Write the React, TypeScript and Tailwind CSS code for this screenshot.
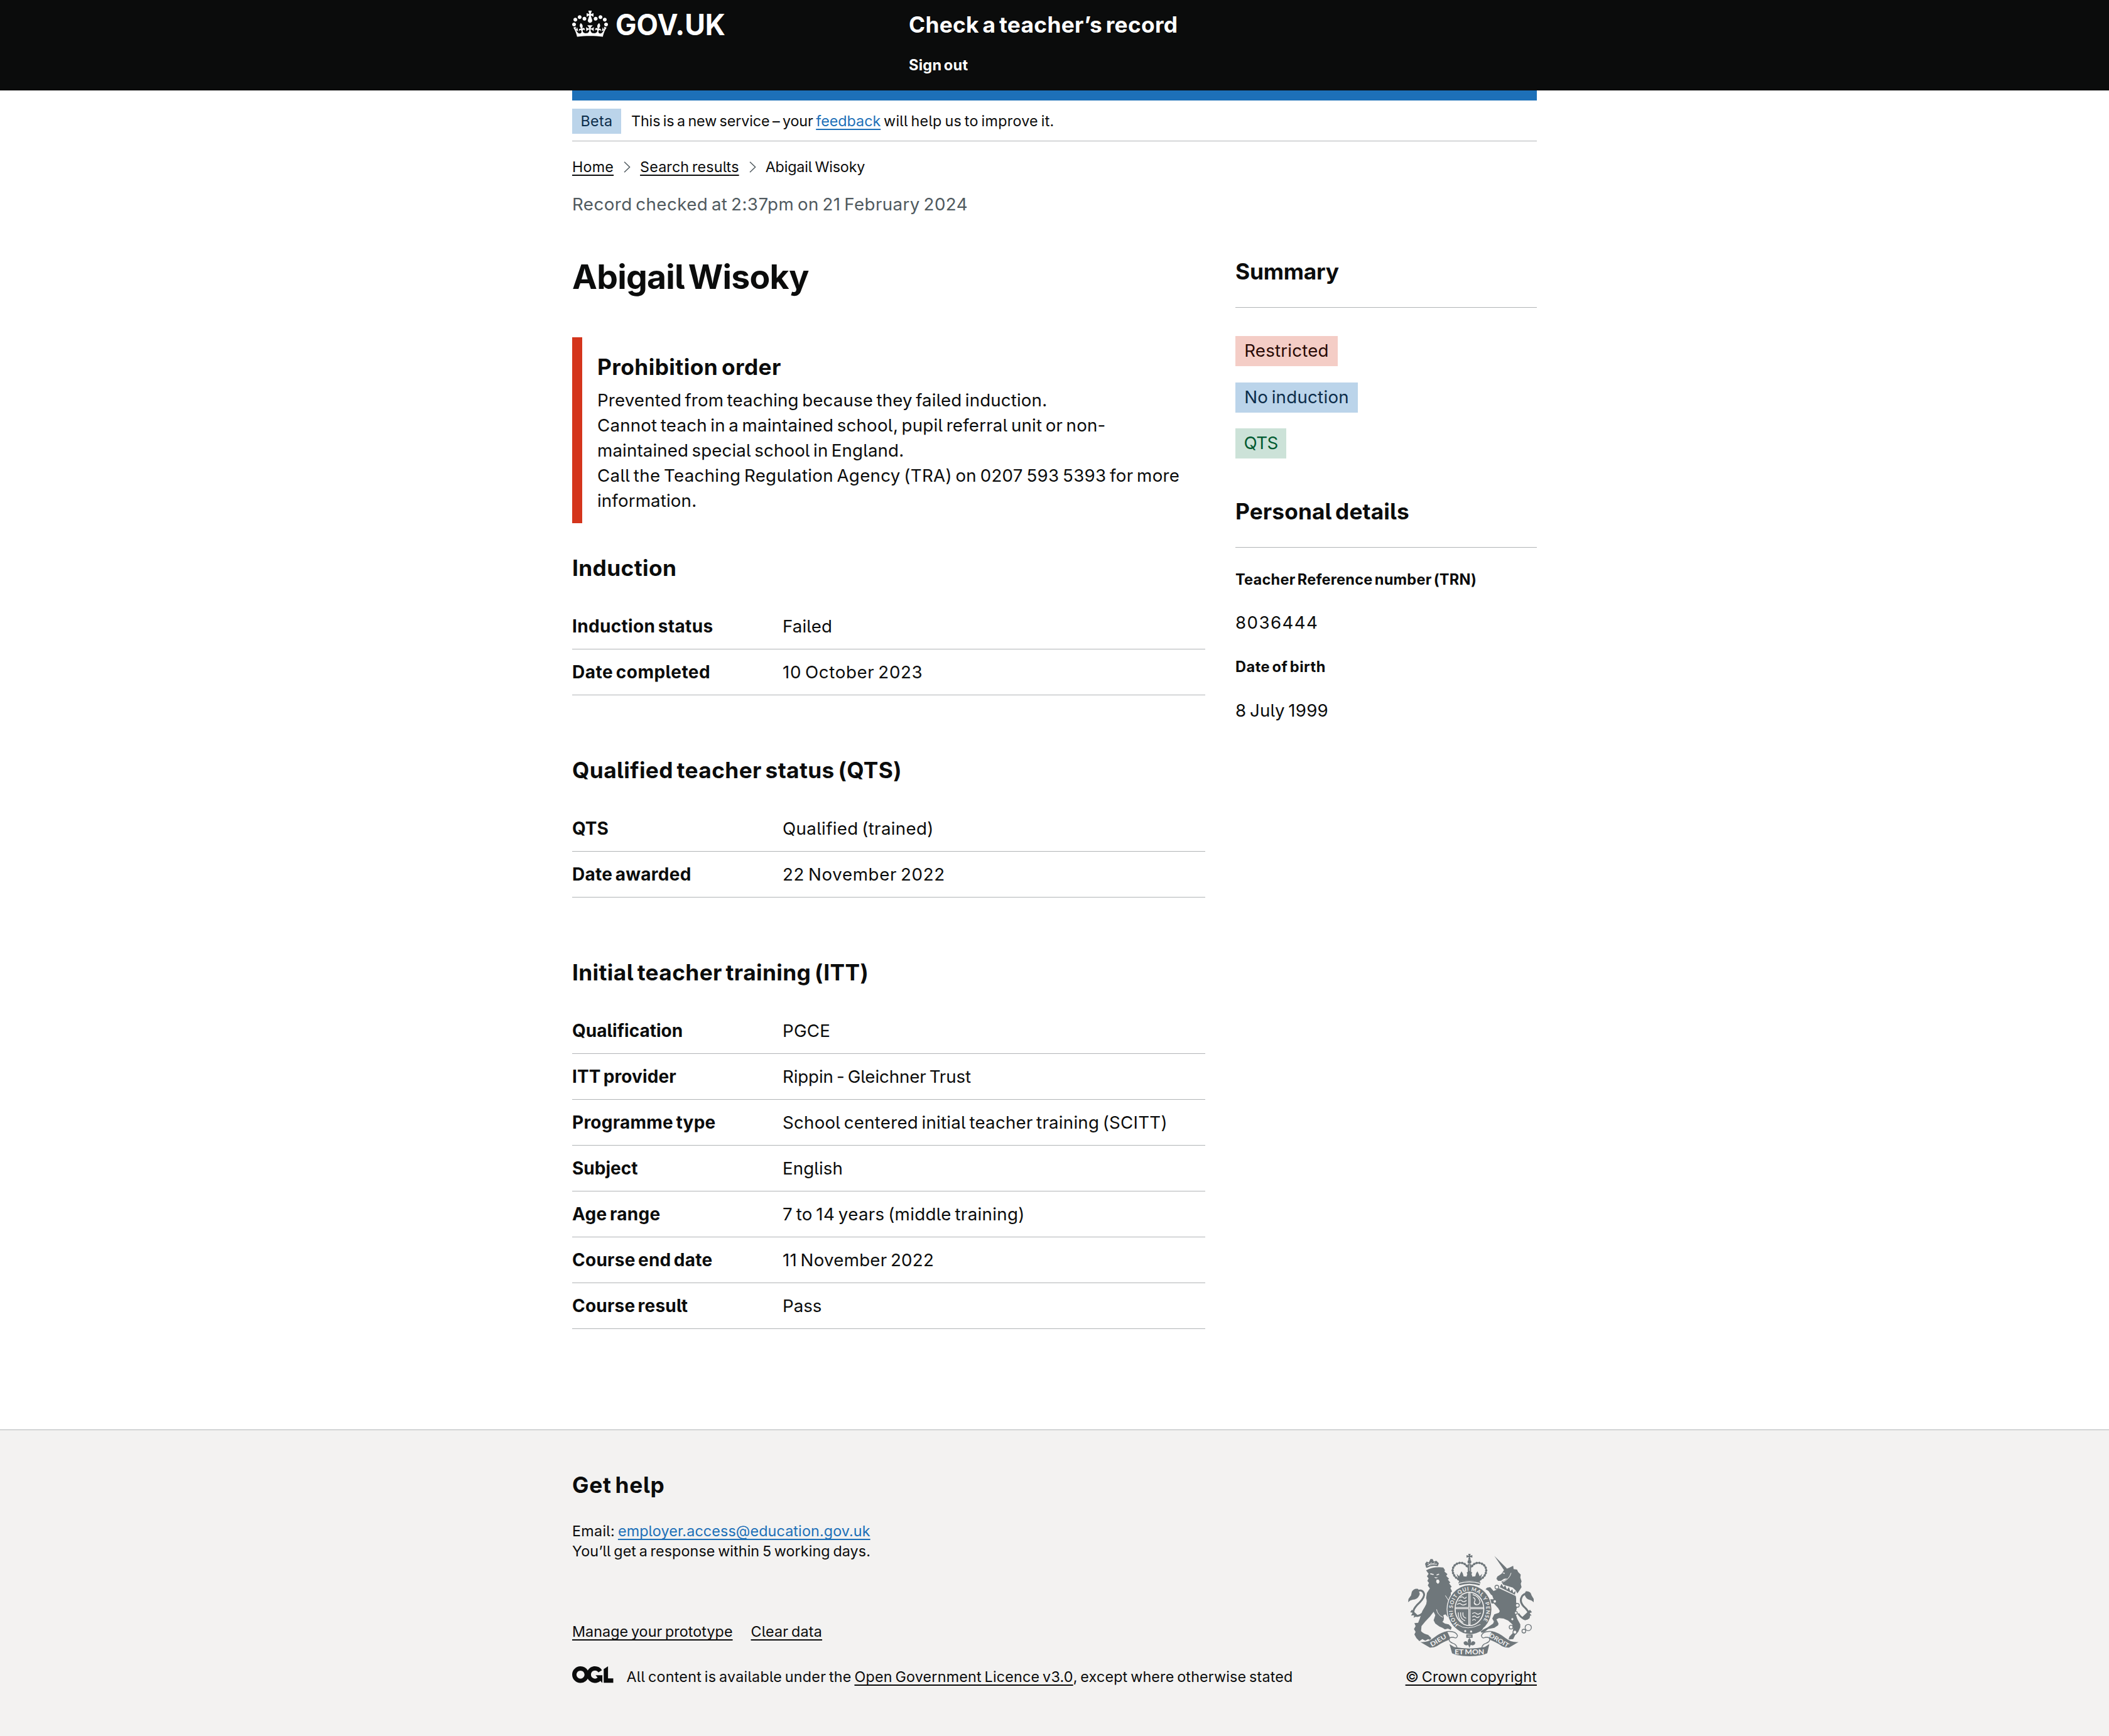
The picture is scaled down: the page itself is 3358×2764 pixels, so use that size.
import type { ReactNode } from 'react';

type Row = { label: string; value: string; labelClass?: string; valueClass?: string };

const induction: Row[] = [
  { label: 'Induction status', value: 'Failed', labelClass: 'tracking-[0.33px]', valueClass: 'tracking-[0.15px]' },
  { label: 'Date completed', value: '10 October 2023', labelClass: 'tracking-[0.5px]', valueClass: 'tracking-[0.65px]' },
];

const qts: Row[] = [
  { label: 'QTS', value: 'Qualified (trained)', valueClass: 'tracking-[0.35px]' },
  { label: 'Date awarded', value: '22 November 2022', labelClass: 'tracking-[0.28px]', valueClass: 'tracking-[0.65px]' },
];

const itt: Row[] = [
  { label: 'Qualification', value: 'PGCE', valueClass: 'tracking-[0.2px]' },
  { label: 'ITT provider', value: 'Rippin - Gleichner Trust', labelClass: 'tracking-[0.1px]', valueClass: 'tracking-[-0.12px]' },
  { label: 'Programme type', value: 'School centered initial teacher training (SCITT)', labelClass: 'tracking-[0.25px]', valueClass: 'tracking-[0.24px]' },
  { label: 'Subject', value: 'English', valueClass: 'tracking-[0.1px]' },
  { label: 'Age range', value: '7 to 14 years (middle training)', labelClass: 'tracking-[0.28px]', valueClass: 'tracking-[0.34px]' },
  { label: 'Course end date', value: '11 November 2022', labelClass: 'tracking-[0.25px]', valueClass: 'tracking-[0.25px]' },
  { label: 'Course result', value: 'Pass', labelClass: 'tracking-[0.2px]' },
];

function Crown() {
  return (
    <svg viewBox="0 0 132 97" className="h-[42px] w-[57px]" fill="currentColor" fillRule="evenodd">
      <path d="M25 30.2c3.5 1.5 7.7-.2 9.1-3.7 1.5-3.6-.2-7.8-3.9-9.2-3.6-1.4-7.6.3-9.1 3.9-1.4 3.5.3 7.5 3.9 9zM9 39.5c3.6 1.5 7.8-.2 9.2-3.7 1.5-3.6-.2-7.8-3.9-9.1-3.6-1.5-7.6.2-9.1 3.8-1.4 3.5.3 7.5 3.8 9zM4.4 57.2c3.5 1.5 7.7-.2 9.1-3.8 1.5-3.6-.2-7.7-3.9-9.1-3.5-1.5-7.6.3-9.1 3.8-1.4 3.5.3 7.6 3.9 9.1zm38.3-21.4c3.5 1.5 7.7-.2 9.1-3.8 1.5-3.6-.2-7.7-3.9-9.1-3.6-1.5-7.6.3-9.1 3.8-1.3 3.6.4 7.7 3.9 9.1zm64.4-5.6c-3.6 1.5-7.8-.2-9.1-3.7-1.5-3.6.2-7.8 3.8-9.2 3.6-1.4 7.7.3 9.2 3.9 1.3 3.5-.4 7.5-3.9 9zm15.9 9.3c-3.6 1.5-7.7-.2-9.1-3.7-1.5-3.6.2-7.8 3.7-9.1 3.6-1.5 7.7.2 9.2 3.8 1.5 3.5-.3 7.5-3.8 9zm4.7 17.7c-3.6 1.5-7.8-.2-9.2-3.8-1.5-3.6.2-7.7 3.9-9.1 3.6-1.5 7.7.3 9.2 3.8 1.3 3.5-.4 7.6-3.9 9.1zM89.3 35.8c-3.6 1.5-7.8-.2-9.2-3.8-1.4-3.6.2-7.7 3.9-9.1 3.6-1.5 7.7.3 9.2 3.8 1.4 3.6-.3 7.7-3.9 9.1zM69.7 17.7l8.9 4.7V9.3l-8.9 2.8c-.2-.3-.5-.6-.9-.9L72.4 0H59.6l3.5 11.2c-.3.3-.6.5-.9.9l-8.8-2.8v13.1l8.8-4.7c.3.3.6.7.9.9l-5 15.4v.1c-.2.8-.4 1.6-.4 2.4 0 4.1 3.1 7.5 7 8.1h.2c.3 0 .7.1 1 .1.4 0 .7 0 1-.1h.2c4-.6 7.1-4.1 7.1-8.1 0-.8-.1-1.7-.4-2.4V34l-5.1-15.4c.4-.2.7-.6 1-.9zM66 92.8c16.9 0 32.8 1.1 47.1 3.2 4-16.9 8.9-26.7 14-33.5l-9.6-3.4c1 4.9 1.1 7.2 0 10.2-1.5-1.4-3-4.3-4.2-8.7L108.6 76c2.8-2 5-3.2 7.5-3.3-4.4 9.4-10 11.9-13.6 11.2-4.3-.8-6.3-4.6-5.6-7.9 1-4.7 5.7-5.9 8-.5 4.3-8.7-3-11.4-7.6-8.8 7.1-7.2 7.9-13.5 2.1-21.1-8 6.1-8.1 12.3-4.5 20.8-4.7-5.4-12.1-2.5-9.5 6.2 3.4-5.2 7.9-2 7.2 3.1-.6 4.3-6.4 7.8-13.5 7.2-10.3-.9-10.9-8-11.2-13.8 2.5-.5 7.1 1.8 11 7.3L80.2 60c-4.1 4.4-8 5.3-12.3 5.4 1.4-4.4 8-11.6 8-11.6H55.5s6.4 7.2 7.9 11.6c-4.2-.1-8-1-12.3-5.4l1.4 16.4c3.9-5.5 8.5-7.7 10.9-7.3-.3 5.8-.9 12.8-11.1 13.8-7.2.6-12.9-2.9-13.5-7.2-.7-5 3.8-8.3 7.1-3.1 2.7-8.7-4.6-11.6-9.4-6.2 3.7-8.5 3.6-14.7-4.6-20.8-5.8 7.6-5 13.9 2.2 21.1-4.7-2.6-11.9.1-7.7 8.8 2.3-5.5 7.1-4.2 8.1.5.7 3.3-1.3 7.1-5.7 7.9-3.5.7-9-1.8-13.5-11.2 2.5.1 4.7 1.3 7.5 3.3l-4.7-15.4c-1.2 4.4-2.7 7.2-4.3 8.7-1.1-3-.9-5.3 0-10.2l-9.5 3.4c5 6.9 9.9 16.7 14 33.5 14.8-2.1 30.8-3.2 47.7-3.2z" />
    </svg>
  );
}

function OglMark() {
  return (
    <svg viewBox="0 0 483.2 195.7" className="-mt-px h-[26.5px] w-[65.5px]" fill="currentColor">
      <path d="M421.5 142.8V.1l-50.7 32.3v161.1h112.4v-50.7zm-122.3-9.6A47.12 47.12 0 0 1 221 97.8c0-26 21.1-47.1 47.1-47.1 16.7 0 31.4 8.7 39.7 21.8l42.7-27.2A97.63 97.63 0 0 0 268.1 0c-36.5 0-68.3 20.1-85.1 49.7A98 98 0 0 0 97.8 0C43.9 0 0 43.9 0 97.8s43.9 97.8 97.8 97.8c36.5 0 68.3-20.1 85.1-49.7a97.76 97.76 0 0 0 149.6 25.4l19.4 22.2h3v-87.8h-80l24.3 27.5zM97.8 145c-26 0-47.1-21.1-47.1-47.1s21.1-47.1 47.1-47.1 47.2 21 47.2 47S123.8 145 97.8 145" />
    </svg>
  );
}

/* Royal coat of arms: lion, unicorn, crowned garter shield and motto ribbon */
function Crest() {
  const ink = '#6f777b';
  const paper = '#f3f2f1';
  return (
    <svg viewBox="36 27 600 489" className="h-[163px] w-[200px]" fill={ink} fontFamily="Lato, sans-serif" fontWeight={700}>
      {/* central crown */}
      <path d="M323 27h12l-3 9 11-3v12l-11-3 3 14h-12l3-14-11 3V33l11 3z" />
      <circle cx="329" cy="65" r="9" />
      <path d="M321 76h16v44h-16z" />
      <path d="M326 80h6v36h-6z" fill={paper} opacity=".45" />
      <g fill="none" stroke={ink}>
        <path d="M276 148C244 130 240 92 266 76c22-13 44-4 55 16M382 148c32-18 36-56 10-72-22-13-44-4-55 16" strokeWidth="5" />
        <path d="M276 148C244 130 240 92 266 76c22-13 44-4 55 16M382 148c32-18 36-56 10-72-22-13-44-4-55 16" strokeWidth="11" strokeLinecap="round" strokeDasharray="1 12" />
      </g>
      <path d="M268 122l12 12 6-14 5-10 6 10 4 14 14 2 4-12-3-8 13-8 13 8-3 8 4 12 14-2 4-14 6-10 5 10 6 14 12-12-12 40q-49-16-98 0z" />
      <path d="M276 163q53-18 106 0l-5 15q-48-15-96 0z" />
      <path d="M279 168q50-15 100 0" fill="none" stroke={paper} strokeWidth="4" />
      {/* lion */}
      <path d="M122 92l-5-18 8-10 10 4 8-16h10l6 12 12-4 12 12-5 14q-28-6-52 8z" />
      <path d="M128 84q24-12 46-8M130 72l8 6 8-8 8 6 10-8" fill="none" stroke={paper} strokeWidth="3" />
      <path d="M122 106Q160 86 204 92L212 104 210 112 224 124 218 132 232 146 226 150 238 164 232 168 244 184 238 190 246 206 240 212 240 330 226 330 214 316 204 320Q212 340 200 352L212 360 230 364 244 378 240 390 226 384 212 388 200 380 186 374 166 360 158 344 166 320 158 304Q140 330 118 350L100 372 98 396Q110 410 132 414L146 428 144 440 132 434 118 442 104 434 90 444 76 430 66 412 72 400 64 386 72 372 66 358 84 356 92 336 104 300 116 280Q130 260 122 238L126 214 140 192 130 178 136 166 128 156 134 144 126 134 134 122Z" />
      <path d="M142 122l16 4M172 128l12-4" stroke={paper} strokeWidth="5" fill="none" />
      <path d="M160 138l8 6 12-4M172 150h10l4 8-2 8-6 4-8-8z" fill={paper} />
      <path d="M214 226l22 34M172 292q4 26 30 38" fill="none" stroke={paper} strokeWidth="3" />
      <path d="M106 310Q80 334 64 316 54 298 78 272 116 238 112 218 104 192 74 208" fill="none" stroke={ink} strokeWidth="9" />
      <path d="M84 194q-20-4-30 14l-4 18-12 16-2 16q10-10 22-12 26 0 34-28zM54 294l-8 12 12 2-8 14 16-2-4 12 22-10z" />
      {/* unicorn */}
      <path d="M448 37l60 60-12 10z" />
      <path d="M538 84l2 16 16 2 6 12 12 12-2 14 6 18-4 12 4 16-10 16-10 14-8-14-14-14-20-6-26-8-8-14 16-6 12-10-16 2-14 10-14 0-8-10 4-10 20-14 14-20 22-8z" />
      <path d="M488 118l10 2" fill="none" stroke={paper} strokeWidth="4" />
      <path d="M528 118q-8 30-40 44" fill="none" stroke={paper} strokeWidth="3" />
      <path d="M482 170l10 16 8-8 8 20 10-12 6 20 10-10 4 18 12-10-4 18-72-36z" />
      <path d="M472 192l78 36 2 10 0 20 6 16-6 26-6 4 12 34 14 26 0 14-10 22-14 14-10 20-22 2 4-14 16-16 2-24-4-18-20-18-22-10-22-2-12 6 10 20-2 8-18 12-30 6-16 14-14 4-6-6 14-10 20-10 26-18 4-10-8-14 10-20 22-8 4-8-14-24-16-34-12-32z" />
      <path d="M466 214l-20-8-18-20-14 2-8 8 14 8 12 18 20 10-4 12-22 0-14-10-8 10 14 14 8 6 20 0 18 20 8-12-8-8 12-12z" />
      <path d="M562 312q28 40 50 20 10-24-24-54-22-24-8-48 14-20 38-8" fill="none" stroke={ink} strokeWidth="9" />
      <path d="M598 206q24-2 28 20l10 16v16q-10-10-22-12-18-6-22-28zM618 294l10 12-12 4 10 12-16 0 2 12-18 10-14-14z" />
      {/* chain */}
      <g fill={paper} stroke={ink} strokeWidth="4">
        <circle cx="460" cy="186" r="9" />
        <circle cx="450" cy="254" r="8" />
        <circle cx="558" cy="273" r="9" />
        <circle cx="551" cy="309" r="7" />
        <circle cx="534" cy="339" r="7" />
        <circle cx="528" cy="377" r="9" />
        <circle cx="546" cy="401" r="9" />
        <circle cx="589" cy="396" r="9" />
        <circle cx="610" cy="379" r="15" />
      </g>
      {/* garter and shield */}
      <ellipse cx="329" cy="292" rx="109" ry="119" fill={paper} />
      <ellipse cx="329" cy="292" rx="105" ry="115" />
      <ellipse cx="329" cy="290" rx="71" ry="82" fill={paper} />
      <ellipse cx="329" cy="290" rx="66" ry="77" />
      <path id="garter" d="M278 364A80 91 0 1 1 380 364" fill="none" />
      <text fontSize="25" fill={paper}>
        <textPath href="#garter" startOffset="0" textLength="400" lengthAdjust="spacing">HONI SOIT QUI MAL Y PENSE</textPath>
      </text>
      <g fill="none" stroke={paper} strokeWidth="4" strokeLinecap="round">
        <path d="M286 236q8-8 14 0t14-2M278 252q10-8 16 0t20-2M272 268q10-8 18 0t24-2" />
        <path d="M344 312q10-8 18 0t20-2M344 328q10-8 16 0t16-2M344 344q8-8 14 0" />
        <path d="M346 222q26 6 34 34-4 16-20 14-12-4-6-16t-6-18M352 262l8 6" />
        <path d="M276 308v8q0 26 22 38M287 308v10q0 20 20 28M298 308v10q0 10 14 16" />
      </g>
      <path d="M263 281h132v10H263zM324 214h10v152h-10z" fill={paper} />
      <path d="M265 284h128v4H265zM327 216h4v148h-4z" opacity=".6" />
      <path d="M272 388q-6-16 8-24 16 14 50 14t56-16q18 10 2 30-24 18-58 18t-58-22z" />
      <path d="M274 366q42 30 108-2" fill="none" stroke={paper} strokeWidth="3" />
      <circle cx="309" cy="396" r="5" fill={paper} />
      <circle cx="337" cy="398" r="5" fill={paper} />
      {/* motto ribbon */}
      <path d="M314 412h30v16h-30z" />
      <path d="M320 420h18" stroke={paper} strokeWidth="3" />
      <path d="M329 428q12 14 6 26 10-18 22-4 0 12-12 14l-10-2-6 14-6-14-10 2q-12-2-12-14 12-14 22 4-6-12 6-26z" />
      <g stroke={paper} strokeWidth="4" paintOrder="stroke">
        <path d="M94 448q34 4 62-18 34-28 66-34l14 30-6 12q-34 14-48 24-18 14-42 13z" />
        <path d="M564 448q-34 4-62-18-34-28-66-34l-14 30 6 12q34 14 48 24 18 14 42 13z" />
      </g>
      <path d="M222 398q42-4 50 20-4 16-18 8-22-4-22 12 2 10 18 16 18 6 20 22M436 398q-42-4-50 20 4 16 18 8 22-4 22 12-2 10-18 16-18 6-20 22" fill="none" stroke={ink} strokeWidth="4" />
      <path d="M234 458l22 14q73 14 146 0l22-14-10 44-22 8q-63 12-126 0l-20-8z" />
      <text x="258" y="506" fontSize="34" fill={paper} textLength="142" lengthAdjust="spacingAndGlyphs">ET MON</text>
      <text transform="translate(149 471) rotate(-31)" fontSize="29" fill={paper} textLength="84" lengthAdjust="spacingAndGlyphs">DIEU</text>
      <text transform="translate(421 422) rotate(31)" fontSize="29" fill={paper} textLength="104" lengthAdjust="spacingAndGlyphs">DROIT</text>
    </svg>
  );
}

function Link({ children, className = '' }: { children: ReactNode; className?: string }) {
  return (
    <a className={`underline decoration-2 underline-offset-[4px] [text-decoration-skip-ink:none] ${className}`}>{children}</a>
  );
}

function Chevron() {
  return (
    <svg viewBox="0 0 11 18" className="h-[18px] w-[11px]" fill="none" stroke="#505a5f" strokeWidth="1.5">
      <path d="M1 .7 9.6 9 1 17.3" />
    </svg>
  );
}

function Heading({ children, className = '' }: { children: ReactNode; className?: string }) {
  return <h2 className={`text-[35.3px] leading-[48px] font-bold [word-spacing:-3px] ${className}`}>{children}</h2>;
}

function SummaryList({ title, rows, className = '' }: { title: string; rows: Row[]; className?: string }) {
  return (
    <section className={className}>
      <Heading className="tracking-[0.37px]">{title}</Heading>
      <dl className="mt-8">
        {rows.map((row) => (
          <div key={row.label} className="flex border-b border-[#b1b4b6] py-4">
            <dt className={`w-[335px] text-[28px] font-bold ${row.labelClass ?? ''}`}>{row.label}</dt>
            <dd className={row.valueClass ?? ''}>{row.value}</dd>
          </div>
        ))}
      </dl>
    </section>
  );
}

export default function App() {
  return (
    <div className="flex min-h-[2764px] flex-col bg-white font-['Inter',sans-serif] text-[27.7px] leading-[40px] text-[#0b0c0c] [font-feature-settings:'cv05'] [word-spacing:-2.5px]">
      <header className="h-36 bg-[#0b0c0c] text-white">
        <div className="mx-auto flex w-[1536px] pt-4">
          <div className="flex w-[536px] items-start gap-[9px] pt-px">
            <Crown />
            <svg viewBox="-4 0 190 44" className="h-[44px] w-[190px] overflow-visible" fill="currentColor">
              <text x="-1" y="38.7" fontSize="46" fontWeight="700" textLength="175" lengthAdjust="spacingAndGlyphs">
                GOV.UK
              </text>
            </svg>
          </div>
          <div className="font-bold">
            <div className="text-[35.3px] leading-[48px] tracking-[0.3px] [word-spacing:-3px]">Check a teacher’s record</div>
            <div className="mt-6 text-[23.6px] leading-8 tracking-[0.25px]">Sign out</div>
          </div>
        </div>
      </header>

      <div className="mx-auto w-[1536px]">
        <div className="h-4 bg-[#1d70b8]" />
        <div className="flex gap-4 border-b border-[#b1b4b6] pt-[13px] pb-[11px] text-[23.3px] [word-spacing:-2px]">
          <span className="w-[78px] bg-[#bbd4ea] text-center tracking-[0.3px] text-[#0c2d4a]">Beta</span>
          <p className="whitespace-pre">
            <span className="tracking-[-0.1px]">This is a new service – your </span>
            <Link className="text-[#1d70b8]">feedback</Link>
            <span className="tracking-[0.27px]"> will help us to improve it.</span>
          </p>
        </div>

        <nav className="mt-[25px] flex items-center text-[23.3px] leading-8 [word-spacing:-2px]">
          <Link className="tracking-[0.2px]">Home</Link>
          <span className="mr-[15px] ml-4"><Chevron /></span>
          <Link className="tracking-[0.15px]">Search results</Link>
          <span className="mr-[15px] ml-4"><Chevron /></span>
          <span className="tracking-[-0.15px]">Abigail Wisoky</span>
        </nav>

        <p className="mt-[23px] tracking-[0.44px] text-[#505a5f]">Record checked at 2:37pm on 21 February 2024</p>

        <div className="mt-16 flex items-start justify-between">
          <main className="w-[1008px]">
            <h1 className="text-[53.5px] leading-[64px] font-bold tracking-[-0.75px] [word-spacing:-6px]">Abigail Wisoky</h1>

            <div className="mt-16 border-l-16 border-[#d4351c] pt-6 pb-4 pl-6 whitespace-nowrap">
              <Heading className="tracking-[0.42px]">Prohibition order</Heading>
              <p className="mt-2">
                <span className="block tracking-[0.15px]">Prevented from teaching because they failed induction.</span>
                <span className="block tracking-[0.2px]">Cannot teach in a maintained school, pupil referral unit or non-</span>
                <span className="block tracking-[0.13px]">maintained special school in England.</span>
                <span className="block tracking-[0.31px]">Call the Teaching Regulation Agency (TRA) on 0207 593 5393 for more</span>
                <span className="block tracking-[0.15px]">information.</span>
              </p>
            </div>

            <SummaryList className="mt-12" title="Induction" rows={induction} />
            <SummaryList className="mt-24" title="Qualified teacher status (QTS)" rows={qts} />
            <SummaryList className="mt-24" title="Initial teacher training (ITT)" rows={itt} />
          </main>

          <aside className="w-[480px]">
            <Heading className="border-b border-[#b1b4b6] pb-8 tracking-[-0.2px]">Summary</Heading>
            <div className="mt-[45px] flex flex-col items-start gap-[25.5px]">
              <span className="h-12 w-[163px] bg-[#f4cdc6] pt-[3px] text-center tracking-[0.2px] text-[#2a0b06]">Restricted</span>
              <span className="h-12 w-[195px] bg-[#bbd4ea] pt-[3px] text-center tracking-[0.25px] text-[#0c2d4a]">No induction</span>
              <span className="h-12 w-[81px] bg-[#cce2d8] pt-[3px] text-center tracking-[-0.6px] text-[#005a30]">QTS</span>
            </div>

            <Heading className="mt-[61px] border-b border-[#b1b4b6] pb-8 tracking-[0.1px]">Personal details</Heading>
            <dl>
              <dt className="mt-[35px] text-[23.6px] leading-8 font-bold tracking-[0.2px]">Teacher Reference number (TRN)</dt>
              <dd className="mt-8 tracking-[1.4px]">8036444</dd>
              <dt className="mt-[35px] text-[23.6px] leading-8 font-bold tracking-[0.45px]">Date of birth</dt>
              <dd className="mt-[33px] tracking-[0.25px]">8 July 1999</dd>
            </dl>
          </aside>
        </div>
      </div>

      <footer className="mt-40 grow border-t border-[#b1b4b6] bg-[#f3f2f1] pt-16 text-[23.3px] leading-8 [word-spacing:-2px]">
        <div className="mx-auto flex w-[1536px] items-end justify-between">
          <div>
            <Heading className="tracking-[0.7px]">Get help</Heading>
            <p className="mt-[33px]">
              <span className="tracking-[0.3px]">Email: </span>
              <Link className="tracking-[0.13px] text-[#1d70b8]">employer.access@education.gov.uk</Link>
              <br />
              <span className="tracking-[0.1px]">You’ll get a response within 5 working days.</span>
            </p>
            <div className="mt-24 flex gap-[29px]">
              <Link className="tracking-[0.07px]">Manage your prototype</Link>
              <Link className="tracking-[0.2px]">Clear data</Link>
            </div>
            <div className="mt-10 flex items-start gap-[21px]">
              <OglMark />
              <p className="tracking-[0.18px]">
                <span className="tracking-[0.24px]">All content is available under the </span>
                <Link className="tracking-[0.2px]">Open Government Licence v3.0</Link>, except where otherwise stated
              </p>
            </div>
          </div>
          <div className="flex flex-col items-center gap-[17px]">
            <Crest />
            <Link className="tracking-[0.15px]">© Crown copyright</Link>
          </div>
        </div>
      </footer>
    </div>
  );
}
